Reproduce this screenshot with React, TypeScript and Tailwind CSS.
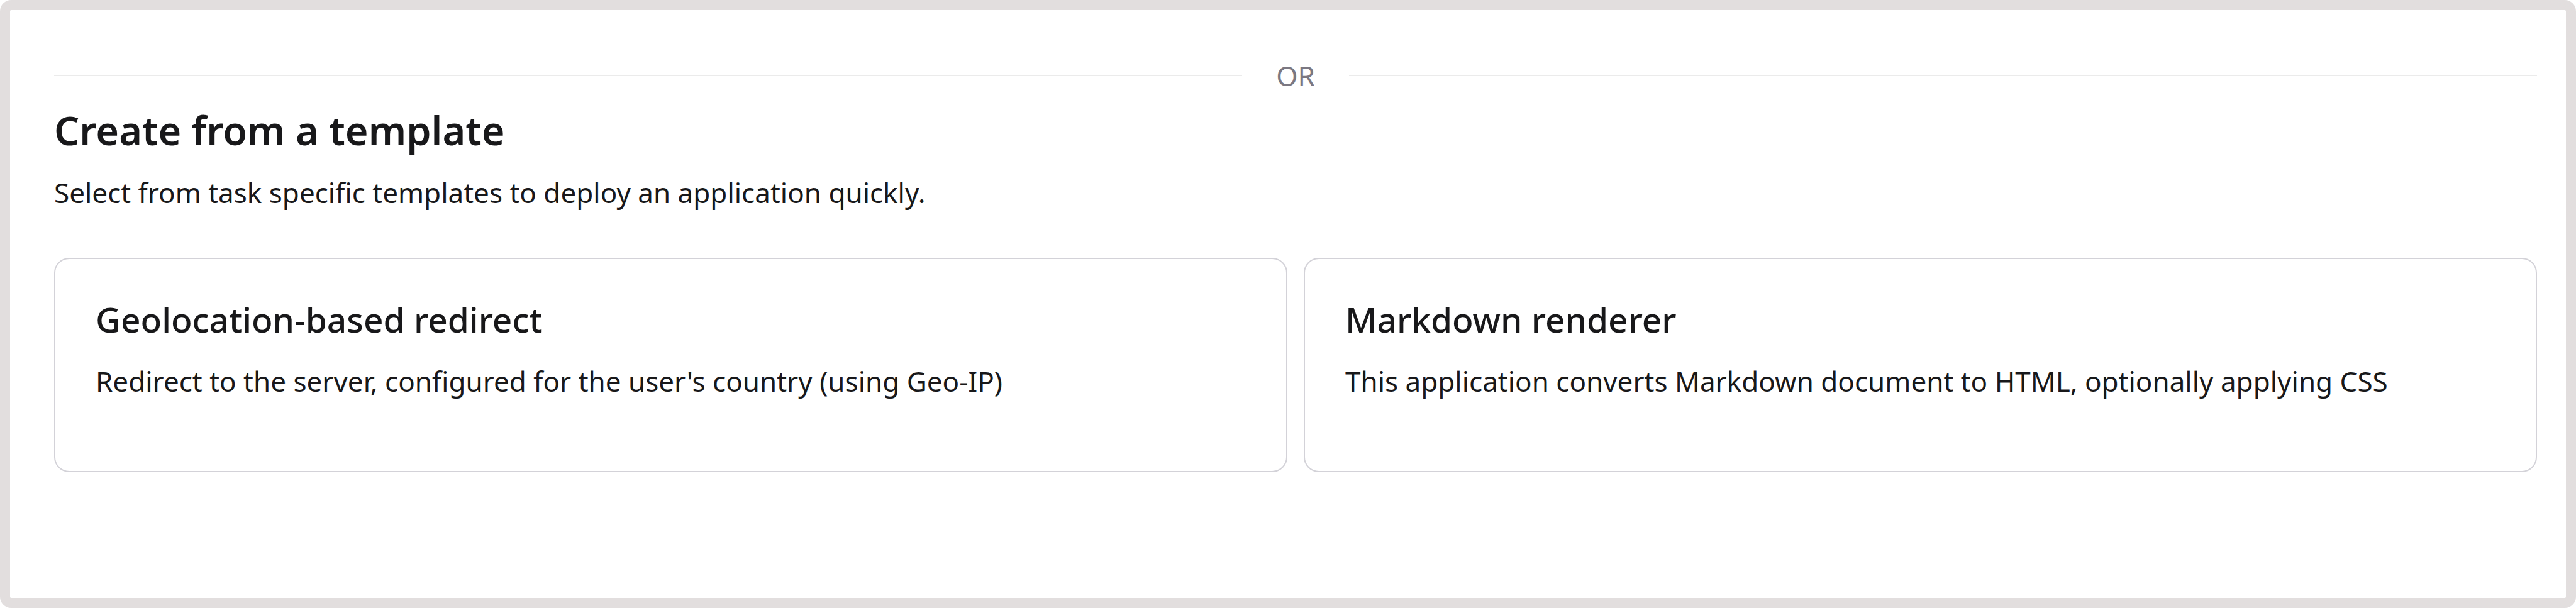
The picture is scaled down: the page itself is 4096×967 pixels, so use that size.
const templates = [
  { title: "Geolocation-based redirect", text: "Redirect to the server, configured for the user's country (using Geo-IP)" },
  { title: "Markdown renderer", text: "This application converts Markdown document to HTML, optionally applying CSS" },
];

export default function App() {
  return (
    <div className="bg-white font-['Noto_Sans',sans-serif] text-[#18181a]">
      <main className="min-h-screen rounded-[18px] border-16 border-[#e2dede] bg-white pt-20 pr-[46px] pb-16 pl-[70px]">
        <div className="flex h-12 items-center gap-[54px] text-[44px] text-[#7b7882]">
          <div className="h-0.5 flex-1 bg-[#ebebeb]" />
          <span>OR</span>
          <div className="h-0.5 flex-1 bg-[#ebebeb]" />
        </div>
        <h1 className="mt-6 text-[63px] leading-[78px] font-semibold">Create from a template</h1>
        <p className="mt-[30px] text-[44px] leading-[60px]">Select from task specific templates to deploy an application quickly.</p>
        <div className="mt-[74px] grid grid-cols-2 gap-[26px]">
          {templates.map((t) => (
            <a key={t.title} href="#" className="block rounded-3xl border-2 border-[#d3d2d8] px-16 pt-[60px] pb-[113px]">
              <h2 className="text-[55px] leading-[72px] font-medium">{t.title}</h2>
              <p className="mt-8 text-[44px] leading-[60px]">{t.text}</p>
            </a>
          ))}
        </div>
      </main>
    </div>
  );
}
